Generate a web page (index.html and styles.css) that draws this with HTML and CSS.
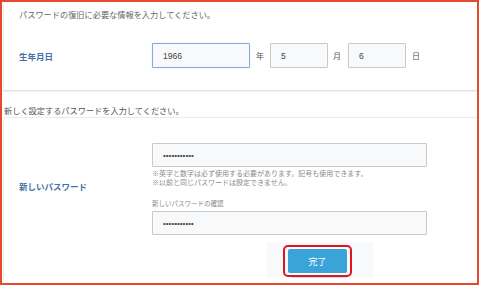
FILE: index.html
```html
<!DOCTYPE html>
<html lang="ja">
<head>
<meta charset="utf-8">
<title>パスワード再設定</title>
<link rel="stylesheet" href="styles.css">
</head>
<body>
<div class="frame">
  <section class="card card-top">
    <p class="lead">パスワードの復旧に必要な情報を入力してください。</p>
    <div class="row row-birth">
      <div class="label">生年月日</div>
      <div class="birth">
        <input class="field year focused" type="text" value="1966">
        <span class="unit">年</span>
        <input class="field small" type="text" value="5">
        <span class="unit unit-m">月</span>
        <input class="field small" type="text" value="6">
        <span class="unit unit-d">日</span>
      </div>
    </div>
  </section>
  <p class="between">新しく設定するパスワードを入力してください。</p>
  <section class="card card-pass">
    <div class="row row-pass">
      <div class="label">新しいパスワード</div>
      <div class="pass-fields">
        <input class="field wide" type="password" value="abcdefghijk">
        <p class="note">※英字と数字は必ず使用する必要があります。記号も使用できます。<br>※以前と同じパスワードは設定できません。</p>
        <p class="sublabel">新しいパスワードの確認</p>
        <input class="field wide" type="password" value="abcdefghijk">
      </div>
    </div>
    <div class="actions">
      <div class="btn-area">
        <button class="btn" type="button">完了</button>
        <span class="highlight"></span>
      </div>
    </div>
  </section>
</div>
</body>
</html>
```

FILE: styles.css
```css
* { box-sizing: border-box; }
html, body { margin: 0; padding: 0; background: #fff; }
body {
  font-family: "Liberation Sans", "Noto Sans CJK JP", sans-serif;
  color: #555;
}
.frame {
  width: 479px;
  height: 285px;
  border: 2px solid #e64a2e;
  overflow: hidden;
  background: #fff;
}
.card {
  margin-left: 1px;
  background: #fff;
  border-left: 1px solid #f0f0f0;
  padding-left: 15px;
}
.card-top {
  padding-top: 8px;
  padding-bottom: 22px;
  border-bottom: 1px solid #e2e2e2;
  box-shadow: 0 1px 1px rgba(0,0,0,0.05);
}
.lead {
  margin: 0;
  font-size: 8.2px;
  line-height: 12px;
  color: #666;
}
.row { display: flex; }
.row-birth { margin-top: 21px; align-items: center; }
.label {
  width: 133px;
  flex: none;
  font-size: 8.5px;
  font-weight: bold;
  color: #4470a6;
}
.birth { display: flex; align-items: center; }
.field {
  display: block;
  height: 25px;
  border: 1px solid #c9c9c9;
  background: #f8f9fb;
  padding: 0 0 0 10px;
  font-family: "Liberation Sans", "Noto Sans CJK JP", sans-serif;
  font-size: 8.5px;
  color: #444;
  border-radius: 1px;
  outline: none;
}
.year { width: 98px; }
.focused { border-color: #8ea6e8; box-shadow: 0 0 1px rgba(110,140,230,0.6); }
.small { width: 58px; }
.unit {
  font-size: 8px;
  color: #555;
  margin: 0 6px 0 6px;
}
.unit-m { margin: 0 7px 0 5px; }
.unit-d { margin: 0 0 0 6px; }
.between {
  margin: 15px 0 0 2px;
  font-size: 8.2px;
  line-height: 11px;
  color: #555;
}
.card-pass {
  border-top: 1px solid #ebebeb;
  padding-top: 25px;
  height: 200px;
}
.row-pass { align-items: center; }
.row-pass .label { padding-bottom: 6px; }
.pass-fields { width: 275px; }
.wide { width: 275px; height: 24px; font-size: 8px; }
.note {
  margin: 2px 0 0 0;
  font-size: 7px;
  line-height: 9px;
  color: #8a8a8a;
}
.sublabel {
  margin: 12px 0 0 0;
  font-size: 6.5px;
  line-height: 9px;
  color: #888;
}
.sublabel + .field { margin-top: 3px; }
.actions { margin-top: 7px; padding-left: 248px; }
.btn-area {
  position: relative;
  width: 106px;
  height: 36px;
  background: #f8f9fa;
  padding: 7px 0 0 21px;
}
.btn {
  display: block;
  width: 59px;
  height: 24px;
  border: none;
  border-radius: 2px;
  background: #3aa3d8;
  color: #fff;
  font-family: "Noto Sans CJK JP", sans-serif;
  font-size: 9px;
  padding: 0;
}
.btn-area::after {
  content: "";
  position: absolute;
  left: 25px;
  top: 35px;
  width: 55px;
  height: 1px;
  background: #bfe0f3;
}
.highlight {
  position: absolute;
  left: 16px;
  top: 3px;
  width: 69px;
  height: 32px;
  border: 2px solid #e3141c;
  border-radius: 5px;
}
```
